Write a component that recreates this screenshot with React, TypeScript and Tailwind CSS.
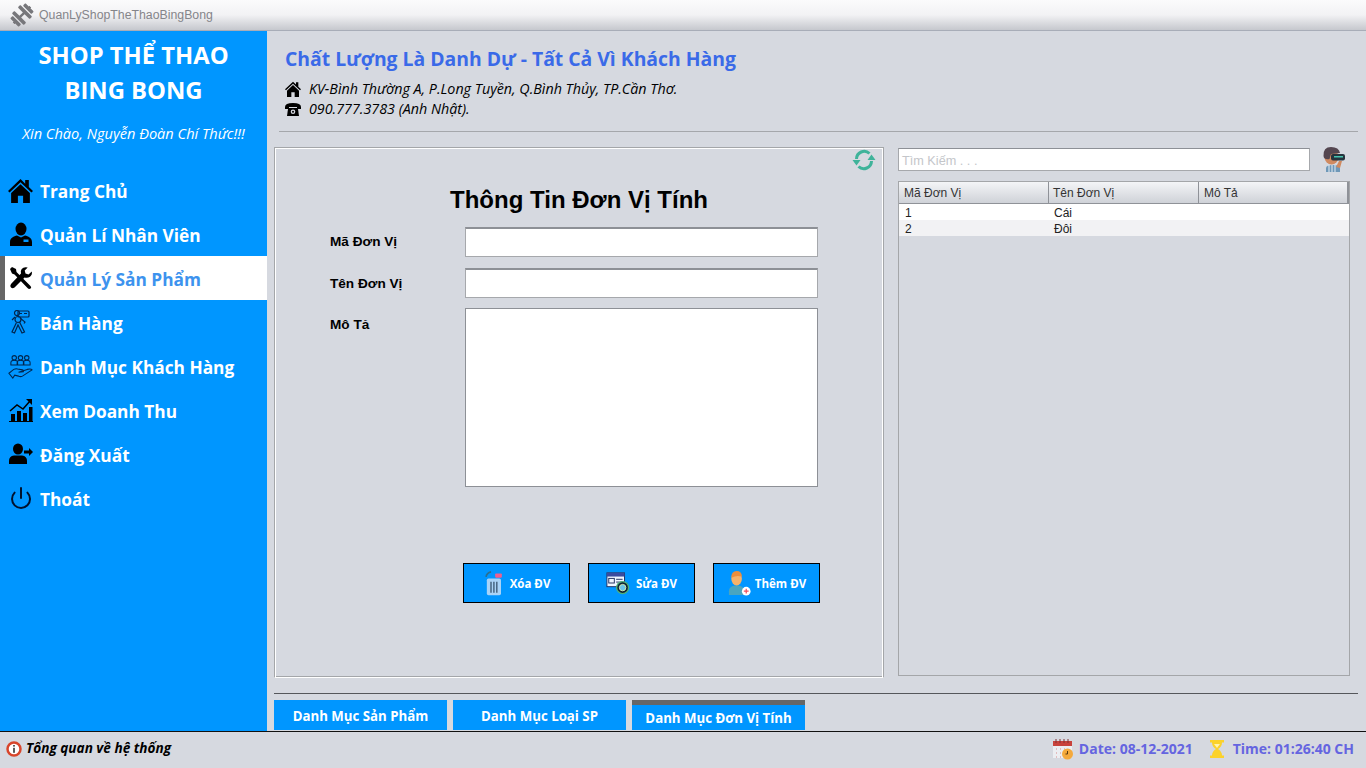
import React from "react";
import { FaDumbbell } from "react-icons/fa";
import { Power } from "lucide-react";

const seg = "font-['Open_Sans','Noto_Sans',sans-serif]";
const ari = "font-['Liberation_Sans',Arial,sans-serif]";

const Home = ({ c = "w-[25px] h-[25px]" }: { c?: string }) => (
  <svg viewBox="0 0 24 24" className={c} fill="#000">
    <path d="M12 1L0 12.500l1.500 1.500L12 4l10.500 10 1.500-1.500-4-3.800V2h-3.500v3.400z" />
    <path d="M12 6L3 14.500V24h6.500v-7h5v7H21v-9.500z" />
  </svg>
);
const Employee = () => (
  <svg viewBox="0 0 24 24" className="w-6 h-6" fill="#000">
    <ellipse cx="12" cy="7" rx="5.500" ry="6.500" />
    <path d="M1 24v-4c0-4 4-6 7-6.500l4 2 4-2c3 .5 7 2.500 7 6.500v4z" />
    <rect x="14.500" y="17.500" width="5" height="2.500" fill="#0096ff" />
  </svg>
);
const Tools = () => (
  <svg viewBox="0 0 24 24" className="w-6 h-6" fill="#000">
    <path d="M1 3l2-2 4 2 .5 3L21 19.500q2 2 .5 3t-3-.5L5.500 8.500 3 7.500z" />
    <path d="M22.800 5.500l-3.300 3-3-1 -.8-3 3-3q-4-1-6 1.500-1.500 2-.7 4.500L2 18q-1.500 2 0 3.500t3.500 0l10-10q3 1 5.500-.8 2.500-2 1.800-5.200z" />
  </svg>
);
const Keys = () => (
  <svg viewBox="0 0 24 24" className="w-6 h-6" fill="none" stroke="#00264f" strokeWidth="1.200">
    <rect x="9" y="1" width="11" height="6" rx="1" />
    <path d="M11 3.500h2M15 3.500h3" />
    <circle cx="8" cy="3" r="2.500" />
    <circle cx="9" cy="9.500" r="3" />
    <path d="M7.500 12.500L3 22l2.500 1 3.500-8 4 8 2.500-1-5-10" />
    <path d="M11 8l5 4-1 1.500M6 7l-3 3" />
  </svg>
);
const Customers = () => (
  <svg viewBox="0 0 26 26" className="w-[25px] h-[25px]" fill="none" stroke="#00264f" strokeWidth="1.100">
    <circle cx="6.500" cy="4" r="2.300" /><circle cx="13" cy="4" r="2.300" /><circle cx="19.500" cy="4" r="2.300" />
    <path d="M3 11.500V9q0-2.500 3.500-2.500T10 9v2.500M9.500 11.500V9q0-2.500 3.500-2.500T16.500 9v2.500M16 11.500V9q0-2.500 3.500-2.500T23 9v2.500M2.500 11.500h21" />
    <path d="M1 20l5-4q2-1 4-.5l5 1q2 .5 1 2l-5 .5 9-3q4-1 5 .5l-10 6.500q-2 1-4 0l-4-1-2 3z" />
  </svg>
);
const Revenue = () => (
  <svg viewBox="0 0 24 24" className="w-6 h-6" fill="#000">
    <rect x="2" y="16" width="4" height="7" /><rect x="8" y="13" width="4" height="10" /><rect x="14" y="15" width="4" height="8" /><rect x="20" y="9" width="3.500" height="14" />
    <rect x="0" y="23" width="24" height="1" />
    <path d="M1 13l7-6 6 4 7-8" fill="none" stroke="#000" strokeWidth="1.500" />
    <path d="M17 1h6v6z" />
  </svg>
);
const Logout = () => (
  <svg viewBox="0 0 24 24" className="w-6 h-6" fill="#000">
    <ellipse cx="9" cy="7" rx="5" ry="5.500" />
    <path d="M0 22v-3q0-5 5-5.500h8q5 .5 5 5.500v3z" />
    <path d="M15 8.500h5V6l4 4-4 4v-2.500h-5z" />
  </svg>
);
const Phone = () => (
  <svg viewBox="0 0 16 16" className="w-4 h-4" fill="#000">
    <path d="M0 6q0-4 8-4t8 4v2h-4V6H4v2H0z" />
    <path d="M3 8l1-1h8l1 1 1 7H2z" />
    <circle cx="8" cy="10.800" r="2.300" fill="#d5d8e0" />
    <circle cx="8" cy="10.800" r="1" />
  </svg>
);
const Refresh = () => (
  <svg viewBox="0 0 24 24" className="absolute right-[7px] top-[0px] w-[24px] h-[24px]" fill="none">
    <path d="M4.500 11a7.700 7.700 0 0 1 13-5.500" stroke="#3fb39a" strokeWidth="3" />
    <path d="M19.500 13a7.700 7.700 0 0 1-13 5.500" stroke="#3fb39a" strokeWidth="3" />
    <path d="M23.500 12h-8l4-5.500zM.5 12h8l-4 5.500z" fill="#3fb39a" />
  </svg>
);
const Trash = () => (
  <svg viewBox="0 0 24 30" className="w-[21px] h-[25px]">
    <path d="M3 7q1-5 6-6" stroke="#2d6f8e" strokeWidth="2" fill="none" />
    <rect x="14" y="3" width="8" height="5" rx="1" fill="#ef5f8f" />
    <rect x="4" y="9" width="17" height="20" rx="2" fill="#a9d3f7" />
    <path d="M9 13v13M12.500 13v13M16 13v13" stroke="#33506b" strokeWidth="1.500" />
  </svg>
);
const WinIcon = () => (
  <svg viewBox="0 0 26 26" className="w-[24px] h-[24px]">
    <rect x="1" y="2" width="19" height="15" fill="#f0f6ff" stroke="#1b2a5c" />
    <rect x="1" y="2" width="19" height="4" fill="#3a4b9f" />
    <rect x="3" y="8" width="6" height="5" fill="none" stroke="#1b2a5c" />
    <path d="M11 9h7M11 12h7" stroke="#1b2a5c" />
    <circle cx="18" cy="18" r="6.500" fill="#123" stroke="#4fb17a" strokeWidth="1.500" />
    <circle cx="18" cy="18" r="3.500" fill="#6bc4e8" stroke="#d7f0b0" />
  </svg>
);
const AddUser = () => (
  <svg viewBox="0 0 26 26" className="w-[25px] h-[25px]">
    <path d="M2 25v-4q0-5 6-6h4q6 1 6 6v4z" fill="#4aa5c0" />
    <ellipse cx="10" cy="8" rx="5.500" ry="7" fill="#f7b26a" />
    <path d="M4.500 7q0-7 5.500-7t5.500 6q-5-2-11 1z" fill="#ee8e3c" />
    <circle cx="20" cy="21" r="4.500" fill="#fff" />
    <path d="M17.500 21h5M20 18.500v5" stroke="#ef4f5f" strokeWidth="1.300" />
  </svg>
);
const Spy = () => (
  <svg viewBox="0 0 24 26" className="w-[24px] h-[26px]">
    <path d="M5 26v-4q0-3 7-3t7 3v4z" fill="#6f98b8" />
    <path d="M8 19v7M11 19v7M14 19v7" stroke="#e8eef4" strokeWidth="1" />
    <ellipse cx="10.500" cy="11" rx="7" ry="7.500" fill="#d08a60" />
    <path d="M2.500 10Q2 1 10 1q8 0 9 6l-9 1-1.500 5Q3 14 2.500 10z" fill="#544650" />
    <rect x="10" y="8" width="14" height="6.500" rx="2" fill="#26343e" />
    <rect x="13" y="10" width="9" height="1.500" fill="#46c4b0" />
    <path d="M15 21l3-6h3l-2 7z" fill="#d08a60" />
  </svg>
);
const Calendar = () => (
  <svg viewBox="0 0 22 22" className="w-[22px] h-[22px]">
    <rect x="1" y="3" width="19" height="17" fill="#eceef2" />
    <rect x="1" y="3" width="19" height="5" fill="#c8423c" />
    <path d="M4 1v4M8 1v4M12 1v4M16 1v4" stroke="#803030" />
    <path d="M4 11h1M8 11h1M12 11h1M4 15h1M8 15h1M4 19h1M8 19h1" stroke="#d88a8a" />
    <circle cx="15.500" cy="16" r="5.500" fill="#f4a93c" />
    <path d="M15.500 13v3h-2" stroke="#5a3a10" fill="none" />
  </svg>
);
const Hourglass = () => (
  <svg viewBox="0 0 16 18" className="w-[16px] h-[18px]">
    <path d="M1 0h14v2.500H13q0 4-4 6.500 4 2.500 4 6.500h2V18H1v-2.500h2q0-4 4-6.500-4-2.500-4-6.500H1z" fill="#fbd22b" />
    <path d="M5 4h6L8 8z" fill="#fff3b0" />
  </svg>
);
const Info = () => (
  <svg viewBox="0 0 16 16" className="w-4 h-4 shrink-0">
    <circle cx="8" cy="8" r="6.500" fill="#fff" stroke="#d8452b" strokeWidth="2.500" />
    <rect x="7.200" y="6.800" width="1.600" height="5" fill="#333" />
    <rect x="7.200" y="4" width="1.600" height="1.600" fill="#333" />
  </svg>
);

const menu: [string, React.ReactNode, boolean?][] = [
  ["Trang Chủ", <Home />],
  ["Quản Lí Nhân Viên", <Employee />],
  ["Quản Lý Sản Phẩm", <Tools />, true],
  ["Bán Hàng", <Keys />],
  ["Danh Mục Khách Hàng", <Customers />],
  ["Xem Doanh Thu", <Revenue />],
  ["Đăng Xuất", <Logout />],
  ["Thoát", <Power className="w-[24px] h-[24px] text-[#00122e]" strokeWidth={2} />],
];

function SideItem({ label, icon, active }: { label: string; icon: React.ReactNode; active?: boolean }) {
  return (
    <div className={`h-11 flex items-center pt-[4px] ${active ? "bg-white border-l-[5px] border-[#666666] pl-[3px]" : "pl-2"}`}>
      <span className="w-[25px] flex justify-center shrink-0 -mt-[4px]">{icon}</span>
      <span className={`ml-[7px] text-[17.3px] font-bold whitespace-nowrap ${seg} ${active ? "text-[#3d93ee]" : "text-white"}`}>{label}</span>
    </div>
  );
}

function ActionBtn({ icon, label, gap }: { icon: React.ReactNode; label: string; gap: string }) {
  return (
    <button className={`w-[107px] h-10 bg-[#0096ff] border border-black flex items-center justify-center ${gap}`}>
      {icon}
      <span className={`pt-[2px] text-[11.5px] font-bold text-white ${seg}`}>{label}</span>
    </button>
  );
}

function Tab({ label, active, w }: { label: string; active?: boolean; w: string }) {
  return (
    <div className={`${w} h-[30px] bg-[#0096ff] flex items-center justify-center text-white text-[13.25px] font-bold ${seg} ${active ? "border-t-[5px] border-[#666666] pt-[2px]" : "pt-[4px]"}`}>
      {label}
    </div>
  );
}

export default function App() {
  return (
    <div className="w-[1366px] h-[768px] overflow-hidden flex flex-col bg-[#d6d9e0]">
      <div className="h-[31px] shrink-0 flex items-center pl-[10px] gap-[5px] bg-gradient-to-b from-[#fbfbfc] via-[#f2f2f4] to-[#c6c8ce] border-b border-[#a8adb8]">
        <FaDumbbell className="w-6 h-6 text-[#77777b] -rotate-45" />
        <span className={`text-[12.3px] text-[#85858a] ${ari}`}>QuanLyShopTheThaoBingBong</span>
      </div>
      <div className="flex-1 flex min-h-0">
        <aside className="w-[267px] shrink-0 bg-[#0096ff] flex flex-col">
          <div className={`pt-[7px] text-center text-white text-[23.8px] leading-[35px] font-bold ${seg}`}>
            <div>SHOP THỂ THAO</div>
            <div>BING BONG</div>
          </div>
          <div className={`mt-[15px] text-center text-white italic text-[14.6px] leading-[20px] ${seg}`}>Xin Chào, Nguyễn Đoàn Chí Thức!!!</div>
          <nav className="mt-[25px] flex flex-col">
            {menu.map(([l, i, a]) => (
              <SideItem key={l} label={l} icon={i} active={a} />
            ))}
          </nav>
        </aside>
        <main className="flex-1 min-w-0 flex flex-col pl-[7px] pr-2">
          <header className="h-[101px] ml-[5px] border-b border-[#a5a7ab] pl-[6px] pt-[13px] shrink-0">
            <h1 className={`text-[19.35px] leading-[30px] font-bold text-[#3a6ae8] ${seg}`}>Chất Lượng Là Danh Dự - Tất Cả Vì Khách Hàng</h1>
            <div className={`mt-[5px] flex items-center gap-2 text-[14.3px] leading-[20px] italic text-black ${seg}`}>
              <Home c="w-4 h-4" />
              <span>KV-Bình Thường A, P.Long Tuyền, Q.Bình Thủy, TP.Cần Thơ.</span>
            </div>
            <div className={`flex items-center gap-2 text-[14.3px] leading-[20px] italic text-black ${seg}`}>
              <Phone />
              <span>090.777.3783 (Anh Nhật).</span>
            </div>
          </header>
          <div className="mt-[15px] flex items-start flex-1 min-h-0">
            <section className="relative w-[610px] h-[531px] shrink-0 border border-[#a4a6a9] border-b-white shadow-[inset_1px_1px_0_#fff,inset_-1px_0_0_#fff,inset_0_-1px_0_#a4a6a9]">
              <Refresh />
              <h2 className={`mt-[37px] text-center text-[24px] leading-[30px] font-bold text-black ${ari}`}>Thông Tin Đơn Vị Tính</h2>
              <div className={`mt-[12px] pl-[55px] grid grid-cols-[135px_353px] gap-y-[11px] text-[13.6px] font-bold text-black ${ari}`}>
                <label className="h-[30px] flex items-center">Mã Đơn Vị</label>
                <div className="h-[30px] bg-white border border-[#a6a8ac] border-t-2 border-t-[#8d9096]" />
                <label className="h-[30px] flex items-center pt-[2px]">Tên Đơn Vị</label>
                <div className="h-[30px] bg-white border border-[#a6a8ac] border-t-2 border-t-[#8d9096]" />
                <label className="h-[30px] flex items-center pt-[2px]">Mô Tả</label>
                <div className="-mt-[1px] h-[179px] bg-white border border-[#8d9096]" />
              </div>
              <div className="mt-[76px] ml-[188px] flex gap-[18px]">
                <ActionBtn icon={<Trash />} label="Xóa ĐV" gap="gap-[6px]" />
                <ActionBtn icon={<WinIcon />} label="Sửa ĐV" gap="gap-[6px]" />
                <ActionBtn icon={<AddUser />} label="Thêm ĐV" gap="gap-[3px]" />
              </div>
            </section>
            <section className="ml-[14px] w-[452px] shrink-0 flex flex-col">
              <div className="flex items-center h-[26px] mt-[-1px]">
                <div className={`w-[412px] h-[23px] bg-white border border-[#a6a8ac] border-t-[#8d9096] pl-[3px] pt-[5px] flex items-center text-[12.7px] text-[#c4c6ca] ${ari}`}>Tìm Kiếm . . .</div>
                <div className="ml-[11px]"><Spy /></div>
              </div>
              <div className={`mt-[9px] w-[452px] h-[495px] border border-[#a4a6a9] ${ari}`}>
                <div className="h-[22px] grid grid-cols-[150px_150px_1fr] bg-gradient-to-b from-[#f4f5f7] to-[#cfd2d8] border-b border-[#8f9298] text-[12px] text-[#333]">
                  <div className="pl-[5px] flex items-center border-r border-[#8f9298]">Mã Đơn Vị</div>
                  <div className="pl-[4px] flex items-center border-r border-[#8f9298]">Tên Đơn Vị</div>
                  <div className="pl-[5px] flex items-center border-r-2 border-[#8f9298]">Mô Tả</div>
                </div>
                <div className="h-4 grid grid-cols-[150px_150px_1fr] bg-white text-[12px] text-[#222] items-center">
                  <div className="pl-[6px]">1</div><div className="pl-[5px]">Cái</div><div />
                </div>
                <div className="h-4 grid grid-cols-[150px_150px_1fr] bg-[#f2f2f4] text-[12px] text-[#222] items-center">
                  <div className="pl-[6px]">2</div><div className="pl-[5px]">Đôi</div><div />
                </div>
              </div>
            </section>
          </div>
          <div className="mb-[6px] h-px bg-[#55575b] shrink-0" />
          <div className="flex gap-[6px] h-[30px] shrink-0 mb-[1px]">
            <Tab label="Danh Mục Sản Phẩm" w="w-[173px]" />
            <Tab label="Danh Mục Loại SP" w="w-[173px]" />
            <Tab label="Danh Mục Đơn Vị Tính" w="w-[173px]" active />
          </div>
        </main>
      </div>
      <footer className="h-[37px] shrink-0 border-t border-[#111] flex items-center pl-[6px] pr-3 pb-[3px] bg-[#d6d9e0]">
        <Info />
        <span className={`ml-[4px] text-[13.6px] font-bold italic text-black ${seg}`}>Tổng quan về hệ thống</span>
        <div className={`ml-auto flex items-center text-[14px] font-bold text-[#6565e0] ${seg}`}>
          <Calendar />
          <span className="ml-[5px]">Date: 08-12-2021</span>
          <span className="ml-[16px]"><Hourglass /></span>
          <span className="ml-[8px]">Time: 01:26:40 CH</span>
        </div>
      </footer>
    </div>
  );
}
